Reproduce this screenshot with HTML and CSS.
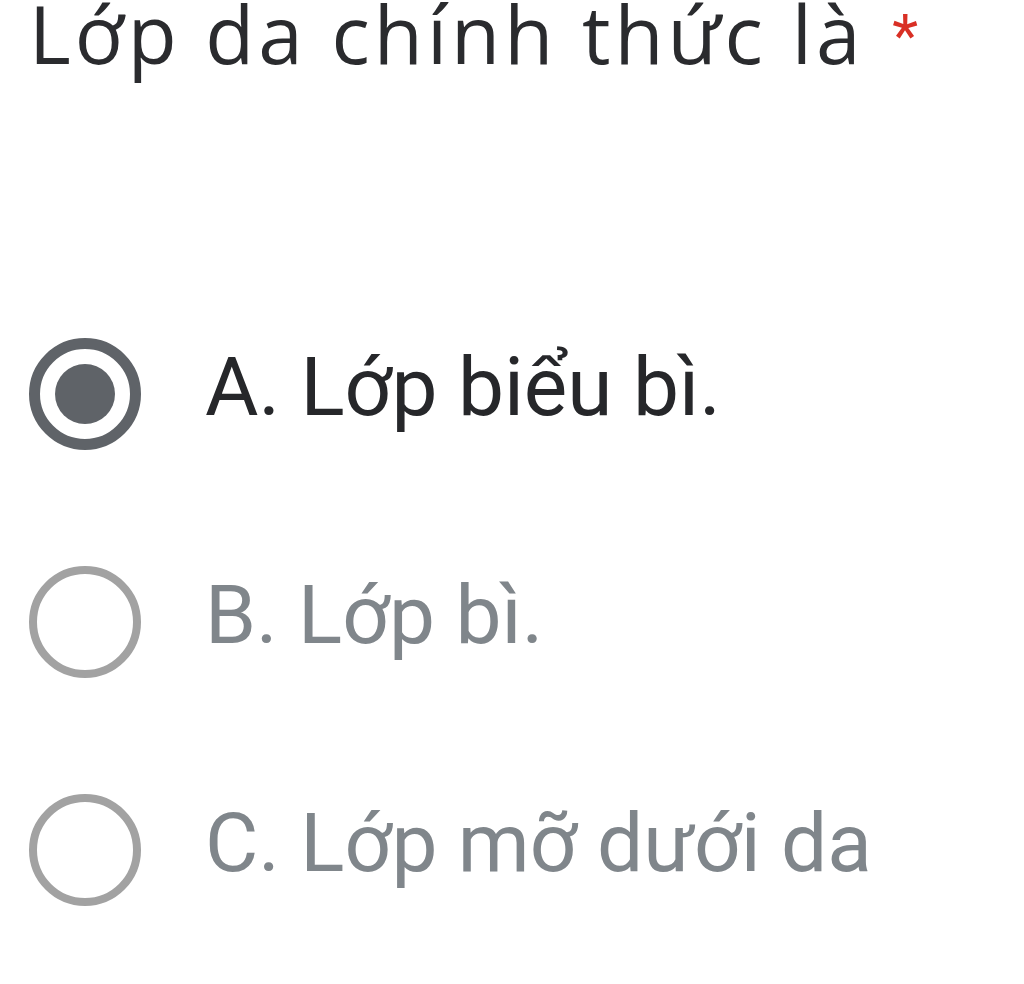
FILE: index.html
```html
<!DOCTYPE html>
<html lang="vi">
<head>
<meta charset="utf-8">
<link rel="stylesheet" href="styles.css">
</head>
<body>
<div class="question">
  <div class="title">Lớp da chính thức là<span class="req">*</span></div>
  <div class="options">
    <div class="option">
      <span class="radio checked"><span class="dot"></span></span>
      <span class="label selected">A. Lớp biểu bì.</span>
    </div>
    <div class="option">
      <span class="radio"></span>
      <span class="label">B. Lớp bì.</span>
    </div>
    <div class="option">
      <span class="radio"></span>
      <span class="label">C. Lớp mỡ dưới da</span>
    </div>
  </div>
</div>
</body>
</html>
```
FILE: styles.css
```css
html, body {
  margin: 0;
  padding: 0;
  background: #ffffff;
}
.question {
  padding-left: 29px;
  font-family: Roboto, "Noto Sans", sans-serif;
}
.title {
  font-family: "Open Sans", Roboto, sans-serif;
  font-size: 80px;
  line-height: 66px;
  height: 66px;
  letter-spacing: 4px;
  color: #2a2b2e;
  white-space: nowrap;
}
.req {
  font-family: Roboto, sans-serif;
  color: #d93025;
  font-size: 60px;
  line-height: 0;
  margin-left: 28px;
  vertical-align: 8px;
  letter-spacing: 0;
}
.options {
  margin-top: 214px;
  display: flex;
  flex-direction: column;
}
.option {
  height: 228px;
  display: flex;
  align-items: center;
  gap: 64px;
}
.radio {
  box-sizing: border-box;
  width: 112px;
  height: 112px;
  border-radius: 50%;
  border: 8px solid #a2a2a2;
  display: flex;
  align-items: center;
  justify-content: center;
  flex: none;
}
.radio.checked {
  border: 11px solid #5f6368;
}
.dot {
  width: 60px;
  height: 60px;
  border-radius: 50%;
  background: #5f6368;
}
.label {
  font-size: 82px;
  line-height: 100px;
  padding-bottom: 14px;
  color: #80868b;
  white-space: nowrap;
}
.label.selected {
  color: #26272a;
}
```
